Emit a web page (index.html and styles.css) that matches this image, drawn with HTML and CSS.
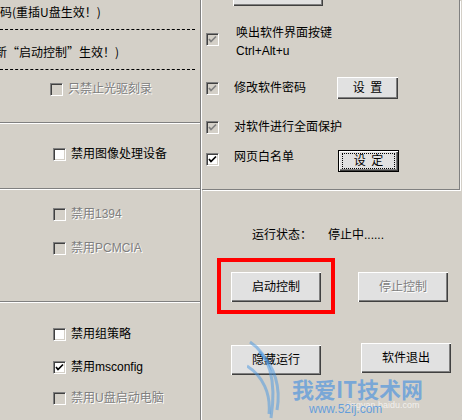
FILE: index.html
```html
<!DOCTYPE html>
<html lang="zh-CN">
<head>
  <meta charset="UTF-8" />
  <meta name="viewport" content="width=device-width, initial-scale=1.0" />
  <title>控制面板</title>
  <link rel="stylesheet" href="styles.css">
</head>
<body>
  <div class="window">
    <div class="left">
      <div class="group group-a">
        <div class="note note-1">码(重插U盘生效！)</div>
        <div class="dash"></div>
        <div class="note note-2">新“启动控制”生效！)</div>
        <div class="dash dash-2"></div>
        <div class="row row-a"><span class="cb off"></span><span class="disabled">只禁止光驱刻录</span></div>
      </div>

      <div class="group group-b">
        <div class="row"><span class="cb"></span><span>禁用图像处理设备</span></div>
      </div>

      <div class="group group-c">
        <div class="row"><span class="cb off"></span><span class="disabled">禁用1394</span></div>
        <div class="row"><span class="cb off"></span><span class="disabled">禁用PCMCIA</span></div>
      </div>

      <div class="group group-d">
        <div class="row"><span class="cb"></span><span>禁用组策略</span></div>
        <div class="row row-d2">
          <span class="cb"><svg viewBox="0 0 11 11"><polyline points="2,5 4,7.5 9,2.5" /></svg></span><span>禁用msconfig</span>
        </div>
        <div class="row row-d3"><span class="cb off"></span><span class="disabled">禁用U盘启动电脑</span></div>
      </div>
    </div>

    <div class="right">
      <div class="options">
        <div class="btn btn-cut"></div>

        <div class="opt opt-hotkey">
          <span class="cb off"><svg viewBox="0 0 11 11" class="grey"><polyline points="2,5 4,7.5 9,2.5" /></svg></span>
          <span class="hotkey">唤出软件界面按键<br>Ctrl+Alt+u</span>
        </div>

        <div class="opt opt-pass">
          <span class="cb off"><svg viewBox="0 0 11 11" class="grey"><polyline points="2,5 4,7.5 9,2.5" /></svg></span>
          <span class="opt-label label-pass">修改软件密码</span>
          <button class="btn btn-small">设 置</button>
        </div>

        <div class="opt opt-guard">
          <span class="cb off"><svg viewBox="0 0 11 11" class="grey"><polyline points="2,5 4,7.5 9,2.5" /></svg></span>
          <span class="opt-label">对软件进行全面保护</span>
        </div>

        <div class="opt opt-white">
          <span class="cb"><svg viewBox="0 0 11 11"><polyline points="2,5 4,7.5 9,2.5" /></svg></span>
          <span class="opt-label label-white">网页白名单</span>
          <button class="btn btn-small btn-default">设 定</button>
        </div>
      </div>

      <div class="status">
        <span>运行状态：</span>
        <span>停止中......</span>
      </div>

      <div class="actions">
        <div class="mark">
          <button class="btn btn-big">启动控制</button>
        </div>
        <button class="btn btn-big btn-off">停止控制</button>
      </div>

      <div class="actions actions-2">
        <button class="btn btn-big btn-hide">隐藏运行</button>
        <button class="btn btn-big btn-quit">软件退出</button>
      </div>

      <div class="watermark">
        <svg class="wings" viewBox="0 0 260 80">
          <path d="M3 2 C 22 14, 30 40, 24 78" />
          <path d="M12 12 C 28 26, 34 48, 30 70" />
          <path d="M0 26 C 16 36, 24 54, 22 74" />
          <path d="M256 20 C 240 34, 228 52, 216 76" />
          <path d="M248 34 C 238 46, 230 58, 222 70" />
        </svg>
        <div class="wm-title">我爱IT技术网</div>
        <div class="wm-site">jingyan.baidu.com</div>
        <div class="wm-url">www.52ij.com</div>
      </div>
    </div>
  </div>
</body>
</html>
```

FILE: styles.css
```css
body {
  margin: 0;
  width: 462px;
  height: 420px;
  overflow: hidden;
  background-color: #d4d0c8;
  color: #000;
  font-family: "Liberation Sans", "Noto Sans CJK SC", sans-serif;
  font-size: 12px;
  line-height: 14px;
}
.window {
  display: flex;
  height: 420px;
}

/* left column */
.left {
  width: 200px;
  flex-shrink: 0;
  border-right: 1px solid #808080;
  box-shadow: 1px 0 0 #fff;
}
.group {
  box-sizing: border-box;
  border-top: 1px solid #fff;
  border-bottom: 1px solid #808080;
}
.group-a {
  display: flow-root;
  height: 123px;
  border-top: none;
}
.group-b {
  height: 66px;
  padding: 23px 0 0 53px;
}
.group-c {
  height: 113px;
  padding: 17px 0 0 53px;
}
.group-c .row + .row {
  margin-top: 20px;
}
.group-d {
  height: 120px;
  border-bottom: none;
  padding: 24px 0 0 53px;
}
.row-d2 {
  margin-top: 19px;
}
.row-d3 {
  margin-top: 17px;
}
.note {
  white-space: nowrap;
  font-family: "Noto Sans CJK SC", sans-serif;
}
.note-1 {
  line-height: 24px;
}
.note-2 {
  margin: 12px 0 0 -5px;
  line-height: 20px;
}
.dash {
  margin: 5px 5px 0 0;
  border-top: 1px dashed #000;
}
.dash-2 {
  margin-top: 7px;
}
.row {
  display: flex;
  align-items: center;
  gap: 5px;
  height: 14px;
  white-space: nowrap;
}
.row-a {
  margin: 12px 0 0 50px;
}

/* checkbox */
.cb {
  box-sizing: border-box;
  width: 13px;
  height: 13px;
  flex-shrink: 0;
  background: #fff;
  border: 1px solid;
  border-color: #808080 #fff #fff #808080;
  box-shadow: inset 1px 1px 0 #404040, inset -1px -1px 0 #d4d0c8;
  display: flex;
}
.cb.off {
  background: #d4d0c8;
}
.cb svg {
  width: 11px;
  height: 11px;
}
.cb polyline {
  fill: none;
  stroke: #000;
  stroke-width: 1.7;
}
.cb svg.grey polyline {
  stroke: #808080;
}
.disabled {
  color: #808080;
  text-shadow: 1px 1px 0 #fff;
}

/* right column */
.right {
  flex: 1;
  margin-left: 1px;
  position: relative;
}
.options {
  display: flow-root;
  box-sizing: border-box;
  width: 258px;
  height: 190px;
  border-right: 1px solid #808080;
  border-bottom: 1px solid #808080;
  box-shadow: 1px 1px 0 #fff;
  padding-left: 4px;
}
.opt {
  display: flex;
  align-items: center;
  white-space: nowrap;
}
.opt .cb {
  margin-right: 15px;
}
.opt-hotkey {
  align-items: flex-start;
  margin-top: 18px;
}
.opt-hotkey .cb {
  margin: 9px 17px 0 0;
}
.hotkey {
  line-height: 18px;
}
.opt-pass {
  height: 22px;
  margin-top: 17px;
}
.label-pass {
  width: 103px;
}
.opt-guard {
  height: 14px;
  margin-top: 21px;
}
.opt-white {
  align-items: flex-start;
  margin-top: 16px;
}
.opt-white .cb {
  margin-top: 3px;
}
.label-white {
  width: 104px;
}

/* buttons */
.btn {
  box-sizing: border-box;
  display: flex;
  align-items: center;
  justify-content: center;
  padding: 0;
  border: none;
  background: #e1e1e1;
  color: #000;
  font: inherit;
  box-shadow: inset 1px 1px 0 #fff, inset -1px -1px 0 #404040, inset -2px -2px 0 #808080;
  white-space: nowrap;
}
.btn-cut {
  width: 90px;
  height: 30px;
  margin: -24px 0 0 27px;
}
.btn-small {
  width: 61px;
  height: 22px;
  word-spacing: 2px;
}
.btn-default {
  position: relative;
  border: 1px solid #000;
}
.btn-default::after {
  content: "";
  position: absolute;
  inset: 2px 3px 2px 3px;
  border: 1px dotted #000;
}
.btn-big {
  width: 90px;
  height: 30px;
}
.btn-off {
  color: #808080;
  text-shadow: 1px 1px 0 #fff;
  margin: 14px 0 0 23px;
}

.status {
  display: flex;
  gap: 16px;
  margin: 38px 0 0 50px;
}
.actions {
  display: flex;
  align-items: flex-start;
  margin-top: 16px;
}
.mark {
  margin-left: 15px;
  border: 4px solid #f00;
  padding: 10px 10px 8px 10px;
}
.actions-2 {
  margin-top: 29px;
}
.btn-hide {
  margin: 2px 0 0 29px;
}
.btn-quit {
  margin-left: 40px;
}

/* watermark over the corner */
.watermark {
  position: absolute;
  left: 45px;
  top: 340px;
  width: 260px;
  height: 80px;
  pointer-events: none;
}
.wings {
  position: absolute;
  inset: 0;
  width: 260px;
  height: 80px;
}
.wings path {
  fill: none;
  stroke: rgba(70, 150, 225, 0.5);
  stroke-width: 3;
}
.wm-title {
  position: absolute;
  left: 45px;
  top: 36px;
  font-family: "Noto Sans CJK SC", sans-serif;
  font-size: 22px;
  font-weight: bold;
  line-height: 24px;
  color: rgba(60, 140, 225, 0.6);
}
.wm-site {
  position: absolute;
  left: 100px;
  top: 58px;
  font-size: 9px;
  color: rgba(255, 255, 255, 0.7);
}
.wm-url {
  position: absolute;
  left: 62px;
  top: 62px;
  font-size: 12px;
  color: rgba(60, 140, 225, 0.75);
}
```
